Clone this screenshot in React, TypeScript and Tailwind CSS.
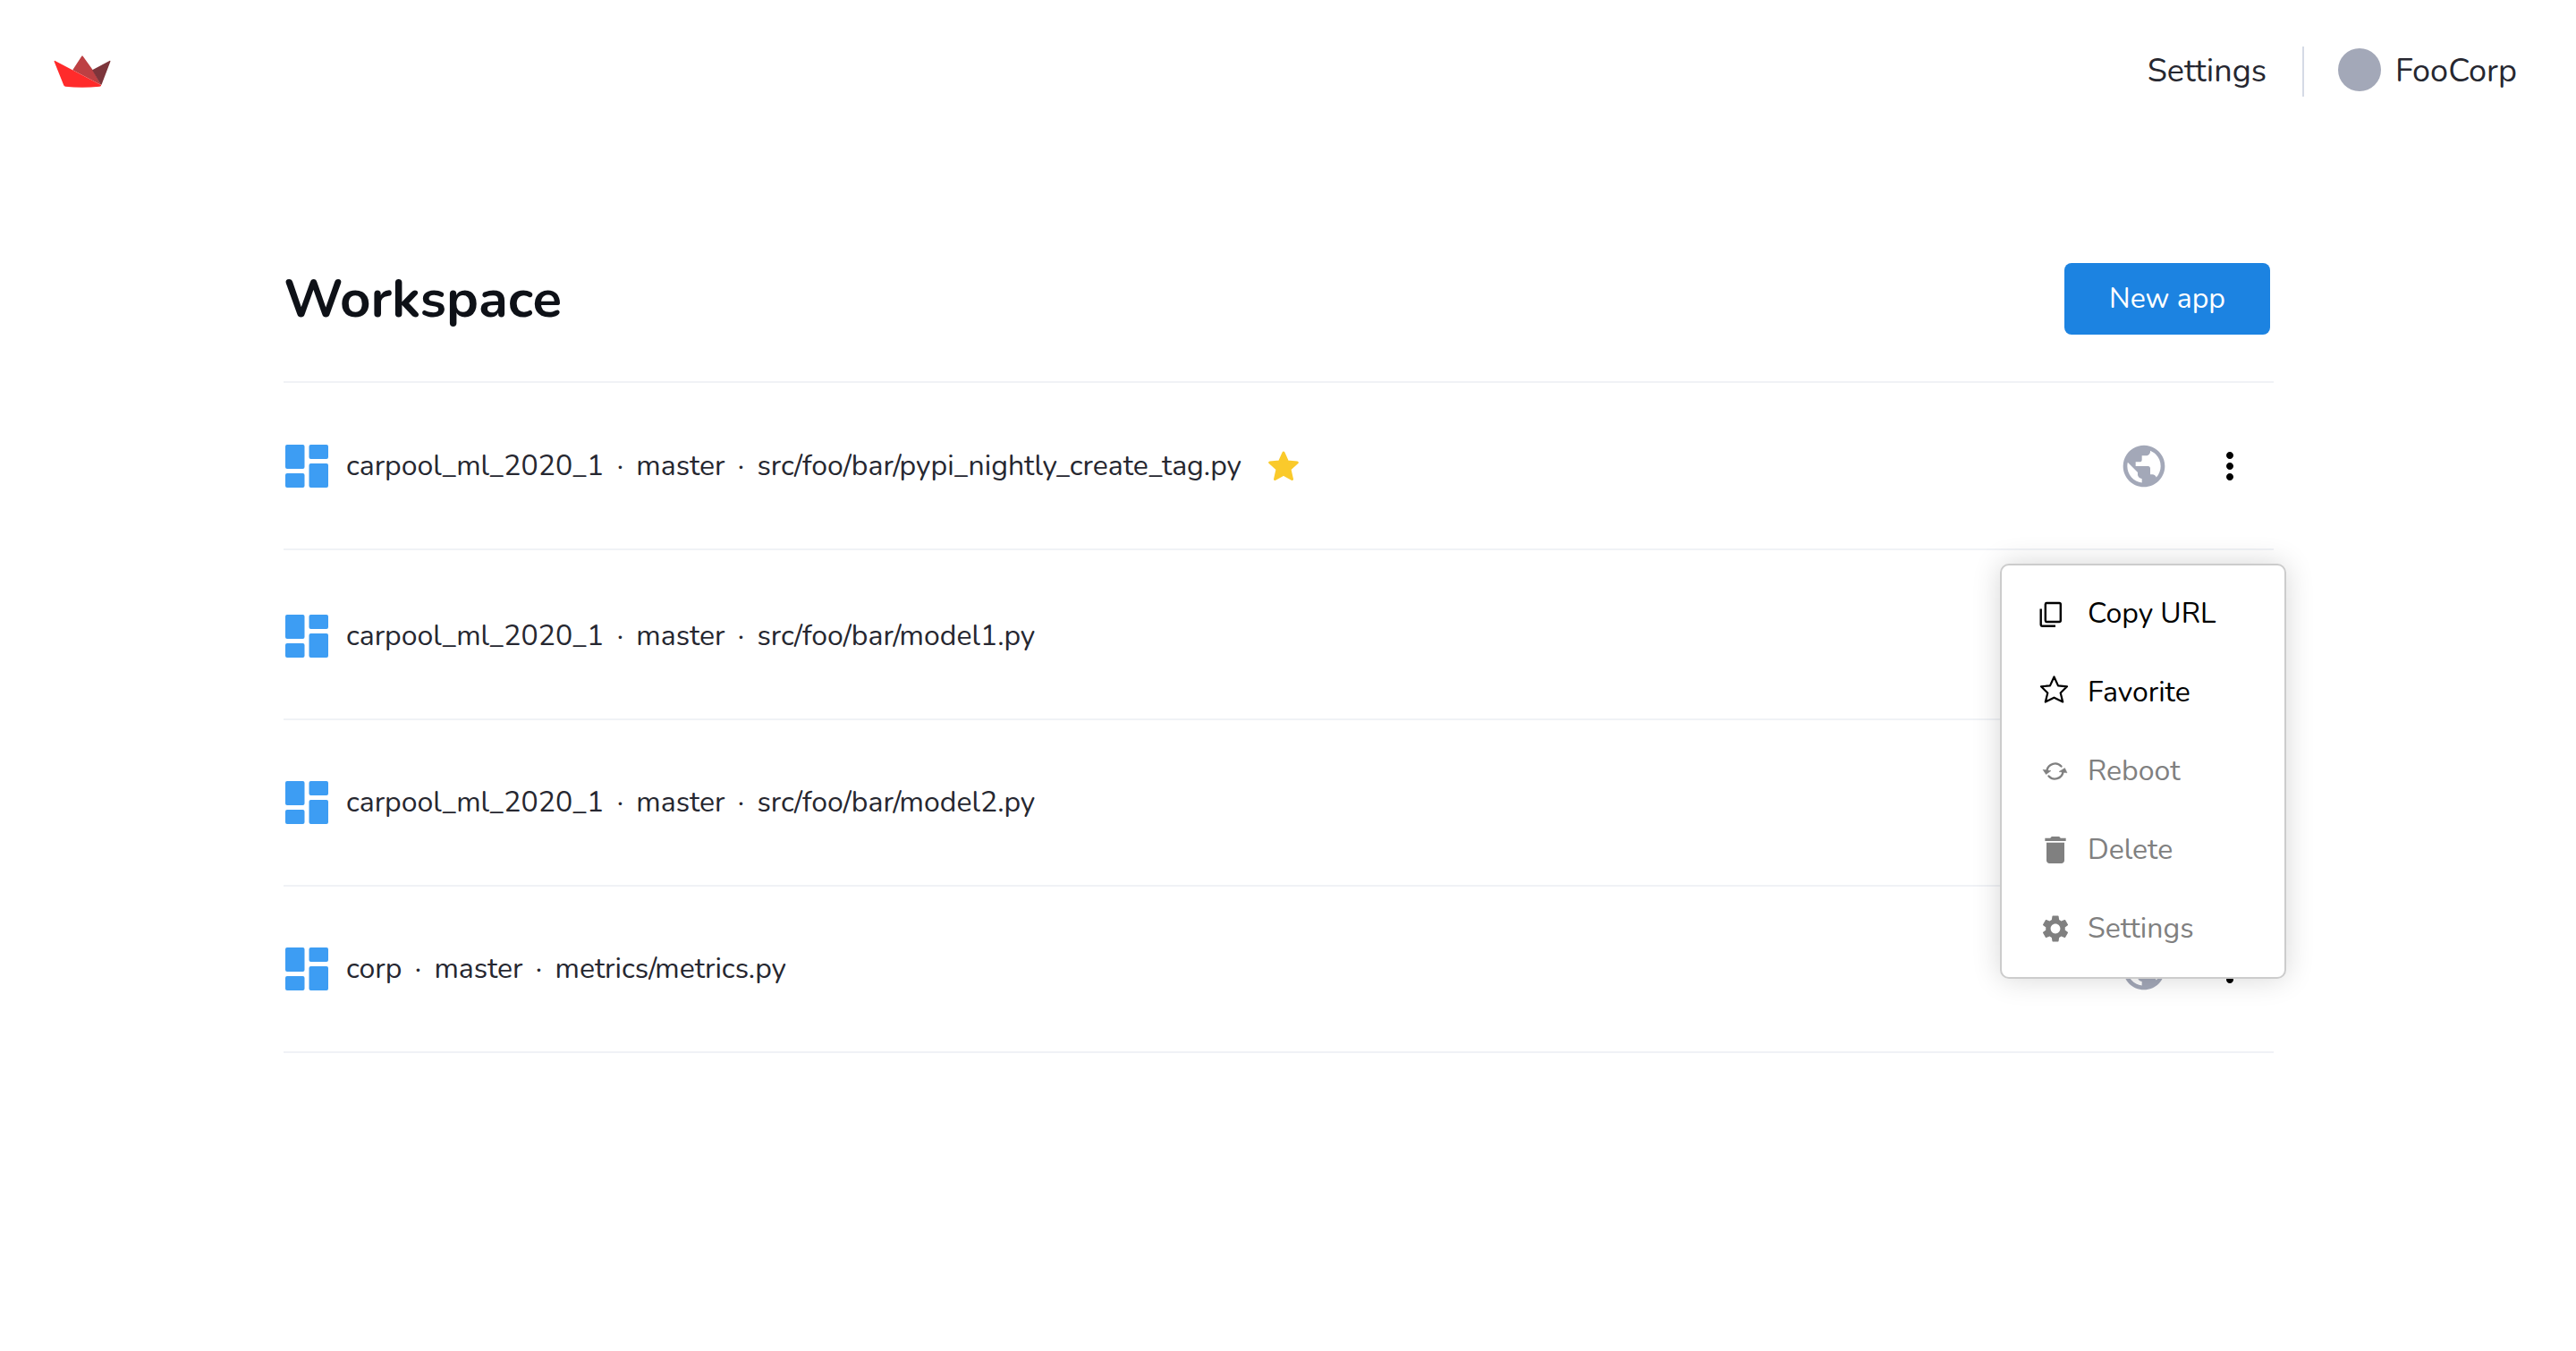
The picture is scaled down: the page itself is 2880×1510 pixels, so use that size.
import type { ReactNode } from "react";
import { MdDelete, MdMoreVert, MdPublic, MdSettings } from "react-icons/md";

type AppEntry = { repo: string; branch: string; file: string; favorite?: boolean };

const apps: AppEntry[] = [
  { repo: "carpool_ml_2020_1", branch: "master", file: "src/foo/bar/pypi_nightly_create_tag.py", favorite: true },
  { repo: "carpool_ml_2020_1", branch: "master", file: "src/foo/bar/model1.py" },
  { repo: "carpool_ml_2020_1", branch: "master", file: "src/foo/bar/model2.py" },
  { repo: "corp", branch: "master", file: "metrics/metrics.py" },
];

function CrownLogo() {
  return (
    <svg viewBox="0 0 192 110" className="block h-9 w-16" role="img" aria-label="Home">
      <path d="M94 2Q96 -1 98 2L132 50 160 101 63 50Z" fill="#bd4043" />
      <path d="M130 50L189 18Q193 17 192 21L162 99Q161 102 158 98Z" fill="#7d353b" />
      <path d="M3 18L160 101Q162 105 155 106Q95 112 38 106Q33 105 32 100L0 21Q0 16 3 18Z" fill="#ff2b2b" />
    </svg>
  );
}

function DashboardIcon() {
  return (
    <svg viewBox="0 0 48 48" className="size-12 shrink-0" fill="#3d9df3" aria-hidden="true">
      <rect width="21.500" height="27" rx="2" />
      <rect y="32" width="21.500" height="16" rx="2" />
      <rect x="26.500" width="21.500" height="16" rx="2" />
      <rect x="26.500" y="21" width="21.500" height="27" rx="2" />
    </svg>
  );
}

function FavoriteStar() {
  return (
    <svg viewBox="0 0 34 34" className="ml-[30px] size-[34px] shrink-0" role="img" aria-label="Favorite">
      <path
        d="M17 2L21.500 12 32.300 13 24 20.500 26.500 31.500 17 26.200 7.500 31.500 10 20.500 1.700 13 12.500 12Z"
        fill="#faca2b"
        stroke="#faca2b"
        strokeWidth="3"
        strokeLinejoin="round"
      />
    </svg>
  );
}

function CopyIcon() {
  return (
    <svg viewBox="2 0 32 32" className="size-8 overflow-visible" fill="none" stroke="currentColor" strokeWidth="2.400" aria-hidden="true">
      <rect x="6.800" y="4" width="17" height="21" rx="1.500" />
      <path d="M1.700 10.500V28Q1.700 29.800 3.500 29.800H18" />
    </svg>
  );
}

function StarOutlineIcon() {
  return (
    <svg viewBox="2 3 32 32" className="size-8 overflow-visible" aria-hidden="true">
      <path
        d="M16.500 1.500L21 11.400 31 12.300 23.700 19.500 26.200 29.500 16.500 24.700 6.800 29.500 9.300 19.500 2 12.300 12 11.400Z"
        fill="none"
        stroke="currentColor"
        strokeWidth="2.200"
        strokeLinejoin="round"
      />
    </svg>
  );
}

function RebootIcon() {
  return (
    <svg viewBox="2 0 32 32" className="size-8" aria-hidden="true">
      <g fill="none" stroke="currentColor" strokeWidth="2.400" strokeLinecap="round">
        <path d="M8.500 15A9.300 9.300 0 0 1 24.500 10.500" />
        <path d="M26.500 17A9.300 9.300 0 0 1 10.500 21.500" />
      </g>
      <path d="M4 14.200L13 15.500 7.500 19.500Z" fill="currentColor" stroke="currentColor" strokeWidth="0.500" />
      <path d="M31 17.800L22 16.500 28.500 12.500Z" fill="currentColor" stroke="currentColor" strokeWidth="0.500" />
    </svg>
  );
}

function MenuItem({ icon, label, disabled }: { icon: ReactNode; label: string; disabled?: boolean }) {
  return (
    <button
      type="button"
      role="menuitem"
      disabled={disabled}
      className="flex h-[88px] w-full items-center gap-5 pl-11 pr-8 text-left text-black disabled:text-[#808080]"
    >
      <span className="flex w-8 shrink-0 justify-center">{icon}</span>
      <span>{label}</span>
    </button>
  );
}

function AppMenu() {
  return (
    <div
      role="menu"
      className="absolute -right-3.5 top-[201px] z-10 w-80 rounded-[10px] border-2 border-[#cccccc] bg-white py-2.5 shadow-[0_0_32px_rgba(0,0,0,0.16)]"
    >
      <MenuItem icon={<CopyIcon />} label="Copy URL" />
      <MenuItem icon={<StarOutlineIcon />} label="Favorite" />
      <MenuItem icon={<RebootIcon />} label="Reboot" disabled />
      <MenuItem icon={<MdDelete className="size-10 shrink-0" />} label="Delete" disabled />
      <MenuItem icon={<MdSettings className="size-9 shrink-0" />} label="Settings" disabled />
    </div>
  );
}

function AppRow({ app, menuOpen }: { app: AppEntry; menuOpen?: boolean }) {
  return (
    <li className="relative flex h-[186px] items-center border-b-2 border-[#f0f2f6] pl-0.5 pr-[25px] first:mb-1">
      <a href="#app" className="flex items-center">
        <DashboardIcon />
        <span className="ml-5 flex">
          <span>{app.repo}</span>
          <span className="w-9 text-center">·</span>
          <span>{app.branch}</span>
          <span className="w-9 text-center">·</span>
          <span>{app.file}</span>
        </span>
      </a>
      {app.favorite && <FavoriteStar />}
      <MdPublic className="ml-auto size-14 shrink-0 text-[#a3a8b8]" />
      <button type="button" aria-label="More options" className="ml-11 text-black">
        <MdMoreVert className="size-12" />
      </button>
      {menuOpen && <AppMenu />}
    </li>
  );
}

export default function App() {
  return (
    <div className="min-h-screen bg-white font-['Nunito',Lato,sans-serif] text-[32px] leading-[44px] text-[#262730]">
      <header className="flex h-40 items-center justify-between pl-[60px] pr-[66px] text-[36px]">
        <a href="#home">
          <CrownLogo />
        </a>
        <nav className="flex items-center leading-[52px]">
          <a href="#settings">Settings</a>
          <span className="ml-10 h-14 w-0.5 bg-[#d5dae5]" />
          <a href="#account" className="ml-[38px] flex items-start gap-4">
            <span className="size-12 rounded-full bg-[#a3a8b8]" />
            FooCorp
          </a>
        </nav>
      </header>

      <main className="pl-[317px] pr-[338px] pt-[134px]">
        <div className="flex h-[134px] items-start justify-between border-b-2 border-[#f0f2f6] pr-1">
          <h1 className="text-[60px] font-bold leading-[80px] text-[#0e1117]">Workspace</h1>
          <button type="button" className="h-20 rounded-lg bg-[#1c83e1] px-[50px] text-white">
            New app
          </button>
        </div>
        <ul className="pt-px">
          {apps.map((app, index) => (
            <AppRow key={app.file} app={app} menuOpen={index === 0} />
          ))}
        </ul>
      </main>
    </div>
  );
}
